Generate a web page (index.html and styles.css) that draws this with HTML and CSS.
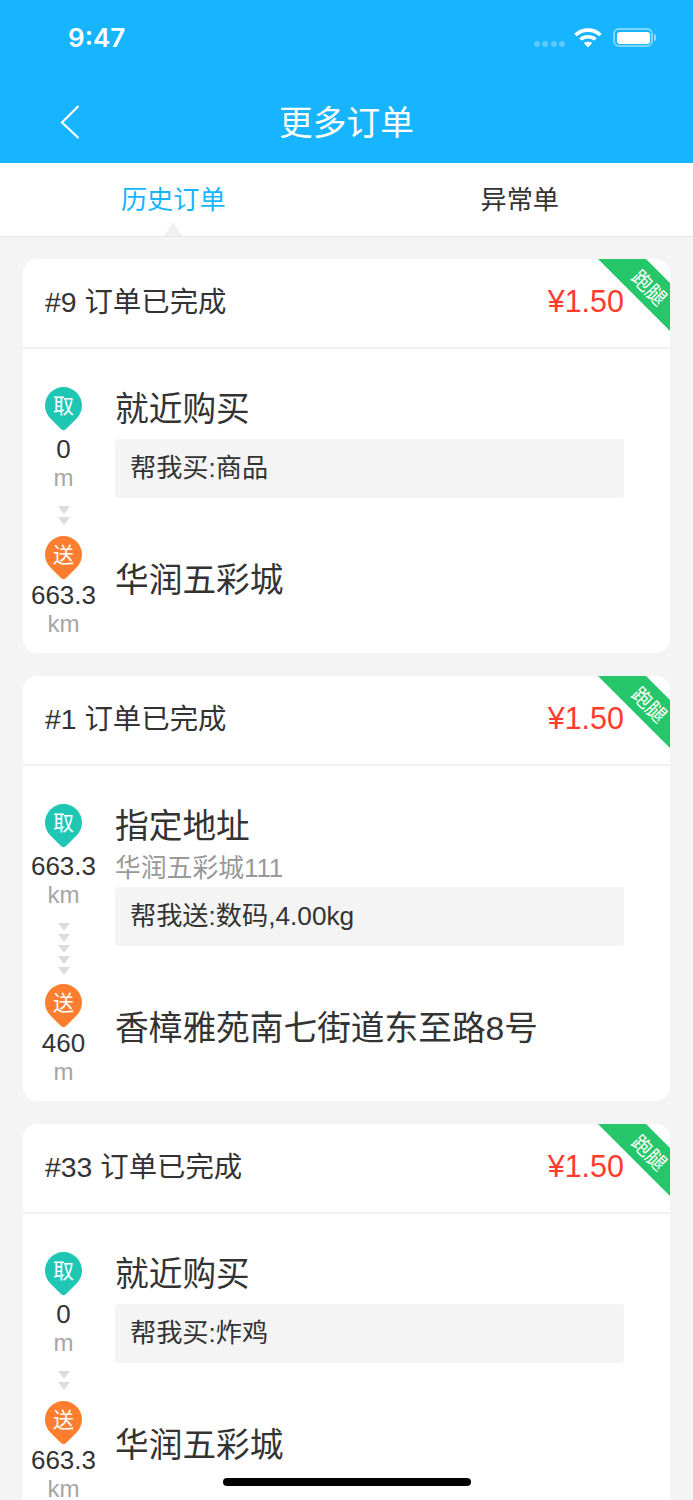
FILE: index.html
```html
<!DOCTYPE html>
<html lang="zh">
<head>
  <meta charset="UTF-8">
  <meta name="viewport" content="width=device-width, initial-scale=1.0">
  <title>更多订单</title>
  <link rel="stylesheet" href="styles.css">
</head>
<body>
  <div class="page">
    <header class="top">
      <div class="status">
        <span class="time">9:47</span>
        <div class="status-icons">
          <span class="signal"><i></i><i></i><i></i><i></i></span>
          <svg class="wifi" width="28" height="20" viewBox="0 0 28 20">
            <path d="M1.500 7C8.500 .5 19.500 .5 26.500 7" fill="none" stroke="#fff" stroke-width="3.600"/>
            <path d="M6.500 11.500C10.500 7.800 17.500 7.800 21.500 11.500" fill="none" stroke="#fff" stroke-width="3.600"/>
            <path d="M9.800 15C12.200 13.200 15.800 13.200 18.200 15L14 19.500Z" fill="#fff"/>
          </svg>
          <span class="battery"><b></b></span>
          <span class="battery-tip"></span>
        </div>
      </div>
      <div class="navbar">
        <svg class="back" width="22" height="36" viewBox="0 0 22 36">
          <path d="M19.500 2L3 18.500L19.500 34" fill="none" stroke="#fff" stroke-width="2.200"/>
        </svg>
        <h1>更多订单</h1>
      </div>
    </header>

    <nav class="tabs">
      <a class="tab active">历史订单</a>
      <a class="tab">异常单</a>
    </nav>

    <main class="list">
      <section class="card">
        <div class="ribbon"></div><span class="ribbon-text">跑腿</span>
        <div class="card-head"><span>#9 订单已完成</span><span class="price">¥1.50</span></div>
        <div class="route">
          <div class="stop">
            <div class="side">
              <span class="pin pick">取</span>
              <span class="dist">0</span>
              <span class="unit">m</span>
              <span class="arrows"><i></i><i></i></span>
            </div>
            <div class="info">
              <div class="place">就近购买</div>
              <div class="note">帮我买:商品</div>
            </div>
          </div>
          <div class="stop">
            <div class="side">
              <span class="pin drop">送</span>
              <span class="dist">663.3</span>
              <span class="unit">km</span>
            </div>
            <div class="info">
              <div class="place">华润五彩城</div>
            </div>
          </div>
        </div>
      </section>

      <section class="card">
        <div class="ribbon"></div><span class="ribbon-text">跑腿</span>
        <div class="card-head"><span>#1 订单已完成</span><span class="price">¥1.50</span></div>
        <div class="route">
          <div class="stop">
            <div class="side">
              <span class="pin pick">取</span>
              <span class="dist">663.3</span>
              <span class="unit">km</span>
              <span class="arrows long"><i></i><i></i><i></i><i></i><i></i></span>
            </div>
            <div class="info">
              <div class="place">指定地址</div>
              <div class="addr">华润五彩城111</div>
              <div class="note">帮我送:数码,4.00kg</div>
            </div>
          </div>
          <div class="stop">
            <div class="side">
              <span class="pin drop">送</span>
              <span class="dist">460</span>
              <span class="unit">m</span>
            </div>
            <div class="info">
              <div class="place">香樟雅苑南七街道东至路8号</div>
            </div>
          </div>
        </div>
      </section>

      <section class="card">
        <div class="ribbon"></div><span class="ribbon-text">跑腿</span>
        <div class="card-head"><span>#33 订单已完成</span><span class="price">¥1.50</span></div>
        <div class="route">
          <div class="stop">
            <div class="side">
              <span class="pin pick">取</span>
              <span class="dist">0</span>
              <span class="unit">m</span>
              <span class="arrows"><i></i><i></i></span>
            </div>
            <div class="info">
              <div class="place">就近购买</div>
              <div class="note">帮我买:炸鸡</div>
            </div>
          </div>
          <div class="stop">
            <div class="side">
              <span class="pin drop">送</span>
              <span class="dist">663.3</span>
              <span class="unit">km</span>
            </div>
            <div class="info">
              <div class="place">华润五彩城</div>
            </div>
          </div>
        </div>
      </section>
    </main>

    <div class="home-bar"></div>
  </div>
</body>
</html>
```

FILE: styles.css
```css
* { box-sizing: border-box; }
body { margin: 0; background: #f4f4f4; font-family: "Liberation Sans", "Noto Sans CJK SC", sans-serif; color: #333; }
.page { position: relative; width: 693px; height: 1500px; overflow: hidden; background: #f4f4f4; }

.top { height: 163px; background: #17b4ff; color: #fff; }
.status { height: 76px; padding: 20px 37px 0 68px; display: flex; justify-content: space-between; align-items: flex-start; }
.time { font-family: Inter, "Liberation Sans", sans-serif; font-size: 26px; line-height: 36px; font-weight: 600; }
.status-icons { display: flex; align-items: center; height: 35px; }
.signal { display: flex; gap: 2.300px; margin-right: 9px; margin-top: 13px; }
.signal i { width: 6px; height: 6px; border-radius: 50%; background: rgba(255,255,255,0.3); }
.wifi { margin-right: 11px; }
.battery { width: 40px; height: 19px; border: 2px solid rgba(255,255,255,0.45); border-radius: 6px; padding: 1.500px; display: block; }
.battery b { display: block; height: 100%; background: #fff; border-radius: 3px; }
.battery-tip { width: 2px; height: 7px; margin-left: 1px; background: rgba(255,255,255,0.5); border-radius: 0 2px 2px 0; }

.navbar { position: relative; height: 87px; padding-top: 5px; text-align: center; }
.navbar h1 { margin: 0; font-size: 33.700px; line-height: 84px; font-weight: 400; }
.back { position: absolute; left: 59px; top: 28px; }

.tabs { position: relative; height: 74px; padding-top: 1px; display: flex; background: #fff; border-bottom: 1px solid #e8e8e8; }
.tab { flex: 1; text-align: center; font-size: 26.200px; line-height: 72px; color: #333; }
.tab.active { color: #17b4ff; position: relative; }
.tab.active::after { content: ""; position: absolute; left: 50%; bottom: 0; margin-left: -9px; border: 9px solid transparent; border-top: 0; border-bottom: 14px solid #f0f0f0; }

.list { padding: 22px 23px 0; display: flex; flex-direction: column; gap: 23px; }
.card { position: relative; background: #fff; border-radius: 14px; overflow: hidden; }
.ribbon { position: absolute; right: 0; top: 0; width: 72px; height: 72px; background: #26c76a; clip-path: polygon(0 0, 48px 0, 72px 24px, 72px 72px); }
.ribbon-text { position: absolute; right: 1px; top: 20px; width: 40px; text-align: center; font-size: 20px; line-height: 18px; color: #fff; transform: rotate(45deg); }

.card-head { height: 90px; padding: 0 46px 2px 22px; display: flex; justify-content: space-between; align-items: center; border-bottom: 2px solid #f2f2f2; font-size: 28.400px; line-height: 44px; }
.price { font-size: 30.500px; margin-top: -2px; color: #ff3b30; }

.route { padding: 38px 46px 15.500px 7px; display: flex; flex-direction: column; }
.stop { display: flex; gap: 18px; }
.stop + .stop { margin-top: 11px; }
.side { width: 67px; flex: none; display: flex; flex-direction: column; align-items: center; }
.info { flex: 1; min-width: 0; }

.pin { width: 37px; height: 37px; margin-bottom: 5px; position: relative; color: #fff; font-size: 21px; line-height: 37px; text-align: center; z-index: 0; }
.pin::after { content: ""; position: absolute; z-index: -1; left: 0; top: 0; width: 37px; height: 37px; border-radius: 50% 50% 4px 50%; transform: rotate(45deg); }
.pick::after { background: #1fc6b4; }
.drop::after { background: #ff7d2f; }
.dist { font-size: 26px; line-height: 29px; margin-top: 6px; color: #333; }
.stop + .stop .dist { margin-top: 3px; }
.unit { font-size: 24px; line-height: 23px; margin: 1.500px 0 3px; color: #a5a5a5; }
.arrows { display: flex; flex-direction: column; gap: 3px; margin-top: 14.500px; }
.arrows.long { margin-bottom: -2px; }
.arrows i { display: block; width: 0; height: 0; border: 6.500px solid transparent; border-bottom: 0; border-top: 8px solid #dcdcdc; }

.place { font-size: 33.700px; line-height: 44px; color: #333; }
.addr { font-size: 25.800px; line-height: 36px; color: #999; margin-top: 2px; }
.note { height: 59px; margin-top: 8px; padding-left: 15px; background: #f4f4f4; border-radius: 3px; font-size: 26.200px; line-height: 58px; color: #333; }
.addr + .note { margin-top: 1px; }
.stop + .stop .place { margin-top: 22px; }

.home-bar { position: absolute; left: 223px; top: 1478px; width: 248px; height: 8px; border-radius: 4px; background: #000; }
```
